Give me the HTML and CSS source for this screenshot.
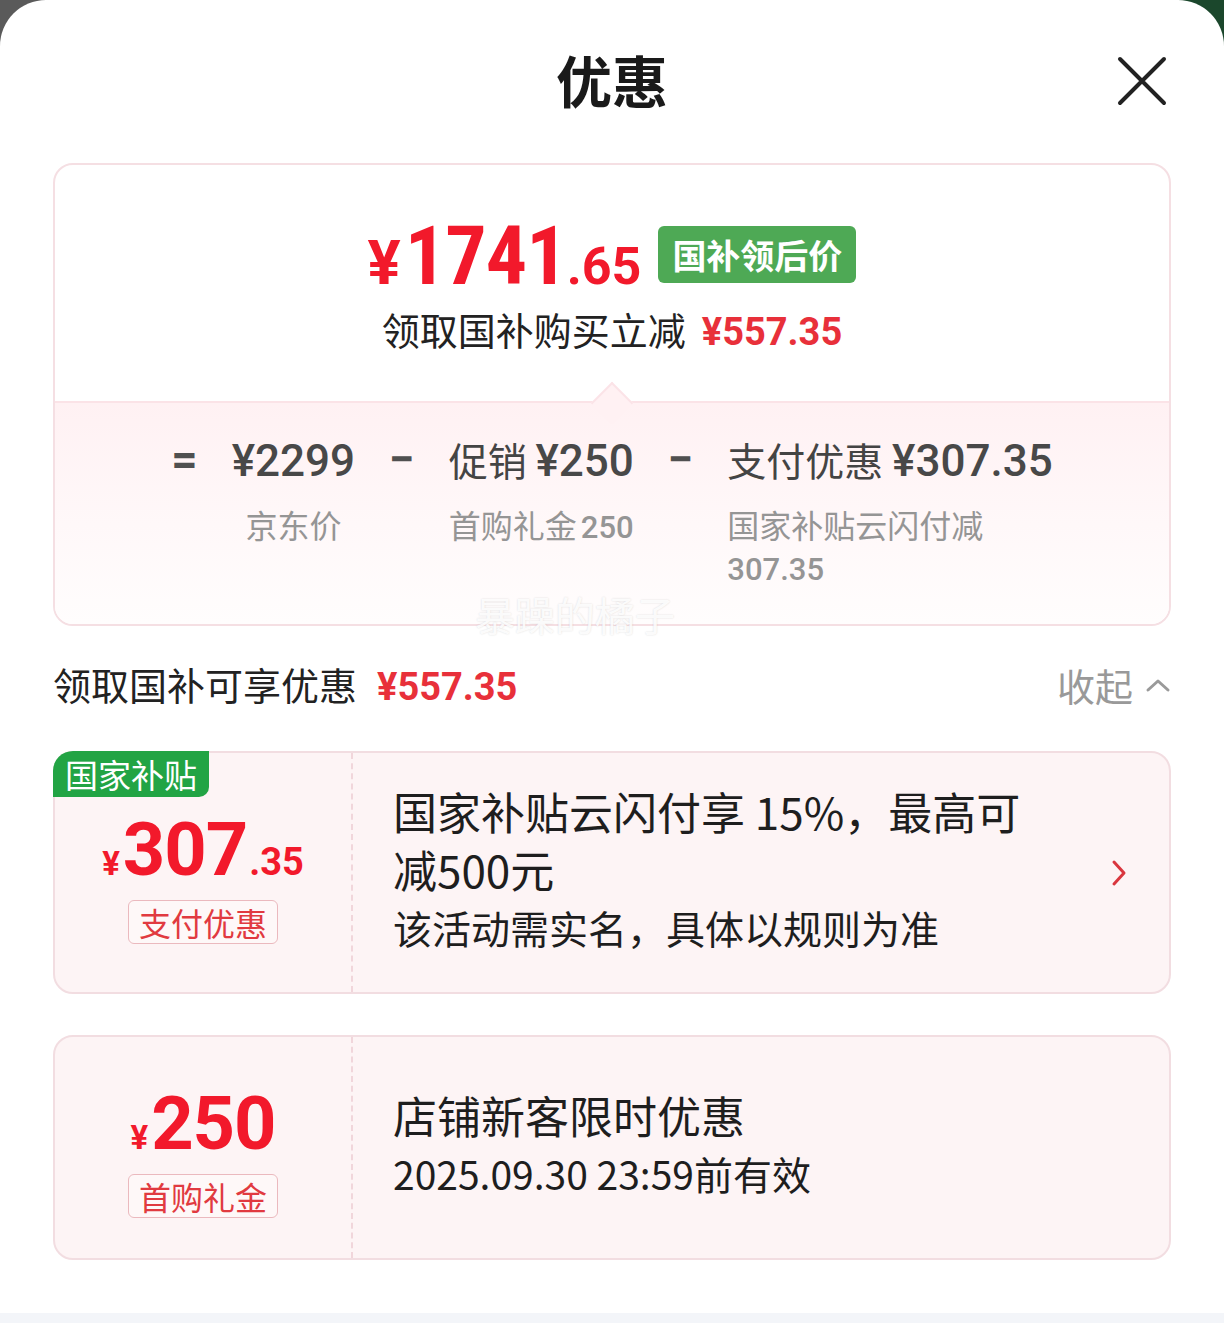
FILE: index.html
```html
<!DOCTYPE html>
<html lang="zh-CN">
<head>
<meta charset="utf-8">
<title>优惠</title>
<link rel="stylesheet" href="styles.css">
</head>
<body>
<div class="sheet">
  <header class="sheet-head">
    <h1 class="title">优惠</h1>
    <button class="close" aria-label="关闭">
      <svg width="50" height="50" viewBox="0 0 50 50"><path d="M3 3 L47 47 M47 3 L3 47" stroke="#222" stroke-width="4" stroke-linecap="round" fill="none"/></svg>
    </button>
  </header>

  <section class="summary">
    <div class="summary-top">
      <div class="price-row">
        <span class="price"><span class="p-yen">¥</span><span class="p-int">1741</span><span class="p-dec">.65</span></span>
        <span class="badge">国补领后价</span>
      </div>
      <div class="save-line">领取国补购买立减<span class="red-num">¥557.35</span></div>
    </div>
    <div class="summary-bottom">
      <div class="formula">
        <div class="op">=</div>
        <div class="term term-center">
          <div class="term-val"><span class="num">¥2299</span></div>
          <div class="term-label">京东价</div>
        </div>
        <div class="op">−</div>
        <div class="term term-center">
          <div class="term-val">促销 <span class="num">¥250</span></div>
          <div class="term-label">首购礼金<span class="lnum">250</span></div>
        </div>
        <div class="op">−</div>
        <div class="term term-left">
          <div class="term-val">支付优惠 <span class="num">¥307.35</span></div>
          <div class="term-label wrap">国家补贴云闪付减<br><span class="lnum">307.35</span></div>
        </div>
      </div>
      <div class="watermark">暴躁的橘子</div>
    </div>
  </section>

  <div class="section-head">
    <div class="section-title">领取国补可享优惠<span class="red-num">¥557.35</span></div>
    <div class="collapse">收起
      <svg width="26" height="16" viewBox="0 0 26 16"><path d="M3 13 L13 4 L23 13" stroke="#9a9a9a" stroke-width="3" fill="none" stroke-linecap="round" stroke-linejoin="round"/></svg>
    </div>
  </div>

  <div class="coupon">
    <span class="corner-tag">国家补贴</span>
    <div class="coupon-left">
      <div class="c-price"><span class="c-yen">¥</span><span class="c-int">307</span><span class="c-dec">.35</span></div>
      <span class="c-tag">支付优惠</span>
    </div>
    <div class="coupon-right">
      <div class="c-text">
        <div class="c-title">国家补贴云闪付享 15%，最高可减500元</div>
        <div class="c-sub">该活动需实名，具体以规则为准</div>
      </div>
      <svg class="c-arrow" width="16" height="28" viewBox="0 0 16 28"><path d="M3 3 L13 14 L3 25" stroke="#d9363e" stroke-width="3" fill="none" stroke-linecap="round" stroke-linejoin="round"/></svg>
    </div>
  </div>

  <div class="coupon coupon-2">
    <div class="coupon-left">
      <div class="c-price"><span class="c-yen">¥</span><span class="c-int">250</span></div>
      <span class="c-tag">首购礼金</span>
    </div>
    <div class="coupon-right">
      <div class="c-text">
        <div class="c-title">店铺新客限时优惠</div>
        <div class="c-sub">2025.09.30 23:59前有效</div>
      </div>
    </div>
  </div>

  <div class="band"></div>
</div>
</body>
</html>
```

FILE: styles.css
```css
* { box-sizing: border-box; }
html, body { margin: 0; padding: 0; }
body {
  background: linear-gradient(90deg, #5a5a5a 0 50%, #1b472c 50% 100%);
  font-family: "Noto Sans CJK SC", "Noto Sans", sans-serif;
  color: #1f1f1f;
  width: 1224px;
  height: 1323px;
  overflow: hidden;
}
.sheet {
  background: #fff;
  border-radius: 46px 46px 0 0;
  height: 1323px;
  display: flex;
  flex-direction: column;
}
.sheet-head {
  height: 163px;
  padding-bottom: 6px;
  display: grid;
  grid-template-columns: 1fr auto 1fr;
  align-items: center;
}
.title {
  grid-column: 2;
  margin: 0;
  font-size: 56px;
  font-weight: 700;
  line-height: 1;
  color: #1a1a1a;
}
.close {
  grid-column: 3;
  justify-self: end;
  margin-right: 57px;
  margin-top: 4px;
  border: 0;
  background: none;
  padding: 0;
  width: 50px;
  height: 50px;
  display: flex;
}
.summary {
  margin: 0 53px;
  border: 2px solid #f5dfe3;
  border-radius: 20px;
}
.summary-top {
  padding: 51px 0 44px;
  display: flex;
  flex-direction: column;
  align-items: center;
  border-radius: 18px 18px 0 0;
}
.price-row {
  display: flex;
  align-items: center;
  gap: 17px;
  height: 80px;
}
.price {
  color: #f2192b;
  font-family: Roboto, "Liberation Sans", sans-serif;
  font-weight: 700;
  line-height: 1;
  display: flex;
  align-items: baseline;
}
.p-yen { font-size: 62px; margin-right: 4px; }
.p-int {
  font-family: "Liberation Sans Narrow", "Roboto Condensed", Roboto, sans-serif;
  font-size: 82px;
  letter-spacing: -1px;
}
.p-dec { font-size: 52px; }
.badge {
  background: #4ea955;
  color: #fff;
  font-weight: 700;
  font-size: 34px;
  line-height: 57px;
  height: 57px;
  padding: 0 14px;
  border-radius: 6px;
  margin-top: -4px;
}
.save-line {
  margin-top: 8px;
  font-size: 38px;
  line-height: 50px;
  color: #222;
}
.red-num {
  color: #e8303a;
  font-family: Roboto, "Liberation Sans", sans-serif;
  font-weight: 700;
  font-size: 38px;
  margin-left: 16px;
}
.summary-bottom {
  position: relative;
  border-top: 2px solid #fbe3e7;
  border-radius: 0 0 18px 18px;
  background: linear-gradient(180deg, #fff1f3 0%, #fff8f9 55%, #fffdfd 100%);
  padding: 30px 0 33px;
}
.summary-bottom::before {
  content: "";
  position: absolute;
  left: 50%;
  top: -15px;
  width: 28px;
  height: 28px;
  margin-left: -15px;
  background: #fff1f3;
  border-top: 2px solid #fbe3e7;
  border-left: 2px solid #fbe3e7;
  transform: rotate(45deg);
}
.formula {
  display: flex;
  justify-content: center;
  align-items: flex-start;
  gap: 34px;
}
.op {
  font-family: Roboto, sans-serif;
  font-weight: 700;
  font-size: 46px;
  line-height: 52px;
  color: #505050;
}
.term { display: flex; flex-direction: column; }
.term-center { align-items: center; }
.term-left { align-items: flex-start; }
.term-val {
  font-size: 39px;
  line-height: 52px;
  color: #444;
  white-space: nowrap;
}
.num {
  font-family: Roboto, sans-serif;
  font-weight: 500;
  font-size: 44px;
  color: #484848;
}
.term-label {
  margin-top: 16px;
  font-size: 32px;
  line-height: 42px;
  color: #959595;
}
.lnum {
  font-family: Roboto, sans-serif;
  font-weight: 500;
  font-size: 31px;
  margin-left: 4px;
}
.wrap .lnum { margin-left: 0; }
.watermark {
  position: absolute;
  left: 420px;
  bottom: -12px;
  font-size: 40px;
  line-height: 44px;
  color: rgba(255, 255, 255, 0.9);
  text-shadow: 0 0 2px rgba(0, 0, 0, 0.14);
}
.section-head {
  margin: 34px 53px 0;
  display: flex;
  justify-content: space-between;
  align-items: center;
  height: 50px;
}
.section-title {
  font-size: 38px;
  color: #222;
  line-height: 50px;
}
.section-title .red-num { margin-left: 20px; }
.collapse {
  font-size: 38px;
  color: #999;
  line-height: 50px;
  display: flex;
  align-items: center;
  gap: 12px;
}
.coupon {
  position: relative;
  margin: 41px 53px 0;
  height: 243px;
  border: 2px solid #f2dde1;
  border-radius: 20px;
  background: #fdf4f5;
  display: flex;
}
.coupon-2 { height: 225px; }
.corner-tag {
  position: absolute;
  left: -2px;
  top: -2px;
  width: 156px;
  height: 46px;
  background: #22a444;
  color: #fff;
  font-size: 33px;
  line-height: 46px;
  text-align: center;
  border-radius: 20px 0 10px 0;
}
.coupon-left {
  width: 298px;
  border-right: 2px dashed #f1d6db;
  display: flex;
  flex-direction: column;
  align-items: center;
  justify-content: center;
  padding-top: 12px;
  gap: 0;
}
.coupon-2 .coupon-left { padding-top: 10px; }
.c-price {
  color: #f2192b;
  font-family: Roboto, "Liberation Sans", sans-serif;
  font-weight: 700;
  line-height: 72px;
  display: flex;
  align-items: baseline;
}
.c-yen { font-size: 33px; margin-right: 3px; }
.c-int { font-size: 74px; letter-spacing: -1px; }
.c-dec { font-size: 38px; margin-left: 2px; }
.c-tag {
  border: 1.5px solid #ebb9be;
  border-radius: 6px;
  color: #e13a40;
  font-size: 32px;
  line-height: 42px;
  padding: 0 10px;
  background: rgba(255, 255, 255, 0.35);
}
.coupon-right {
  flex: 1;
  display: flex;
  align-items: center;
  padding: 0 42px 8px 40px;
}
.c-text { flex: 1; }
.c-title {
  font-size: 44px;
  line-height: 58px;
  color: #1e1e1e;
  max-width: 660px;
}
.c-sub {
  font-size: 39px;
  line-height: 58px;
  color: #1e1e1e;
}
.c-arrow { flex: none; margin-top: 8px; }
.band {
  margin-top: auto;
  height: 10px;
  background: #f3f5f9;
}
```
